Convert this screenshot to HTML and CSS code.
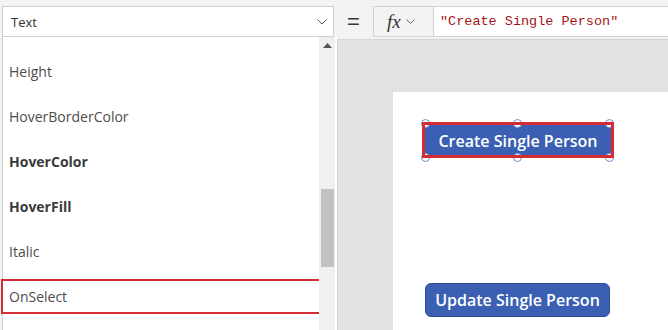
FILE: index.html
```html
<!DOCTYPE html>
<html>
<head>
<meta charset="utf-8">
<link rel="stylesheet" href="styles.css">
</head>
<body>
<div class="app">
  <div class="topbar">
    <div class="prop-select">
      <span class="prop-name">Text</span>
      <svg class="chev" width="10" height="6" viewBox="0 0 10 6"><path d="M0.5 0.5 L5 5 L9.5 0.5" fill="none" stroke="#555" stroke-width="1"/></svg>
    </div>
    <div class="equals">=</div>
    <div class="fx-box">
      <span class="fx">fx</span>
      <svg class="fx-chev" width="9" height="5" viewBox="0 0 9 5"><path d="M0.5 0.5 L4.5 4.5 L8.5 0.5" fill="none" stroke="#666" stroke-width="1"/></svg>
    </div>
    <div class="formula">"Create Single Person"</div>
  </div>
  <div class="main">
    <div class="list-panel">
      <div class="list">
        <div class="row">Height</div>
        <div class="row">HoverBorderColor</div>
        <div class="row bold">HoverColor</div>
        <div class="row bold">HoverFill</div>
        <div class="row">Italic</div>
        <div class="row selected">OnSelect</div>
      </div>
      <div class="scrollbar">
        <svg class="up" width="9" height="5" viewBox="0 0 9 5"><path d="M0 5 L4.5 0 L9 5 Z" fill="#555"/></svg>
        <div class="thumb"></div>
      </div>
    </div>
    <div class="stage">
      <div class="canvas">
        <div class="btn create">Create Single Person</div>
        <span class="handle h-l h-t"></span>
        <span class="handle h-m h-t"></span>
        <span class="handle h-r h-t"></span>
        <span class="handle h-l h-b"></span>
        <span class="handle h-m h-b"></span>
        <span class="handle h-r h-b"></span>
        <div class="sel-box"></div>
        <div class="btn update">Update Single Person</div>
      </div>
    </div>
  </div>
</div>
</body>
</html>
```

FILE: styles.css
```css
* { box-sizing: border-box; }
html, body { margin: 0; padding: 0; }
body {
  width: 668px;
  height: 330px;
  overflow: hidden;
  font-family: "Open Sans", "Noto Sans", sans-serif;
  background: #f3f3f3;
}
.app {
  width: 668px;
  height: 330px;
  display: flex;
  flex-direction: column;
}
.topbar {
  height: 37px;
  padding-top: 6px;
  display: flex;
  align-items: flex-start;
  background: #f3f3f3;
}
.prop-select {
  margin-left: 2px;
  width: 332px;
  height: 31px;
  background: #fff;
  border: 1px solid #cfcfcf;
  display: flex;
  align-items: center;
  justify-content: space-between;
  padding: 0 6px 0 8px;
}
.prop-name {
  font-size: 13px;
  color: #333;
  font-family: "Open Sans", sans-serif;
}
.equals {
  width: 39px;
  height: 31px;
  display: flex;
  align-items: center;
  justify-content: center;
  font-size: 22px;
  color: #333;
  font-family: "Liberation Sans", sans-serif;
}
.fx-box {
  width: 60px;
  height: 31px;
  border: 1px solid #d2d2d2;
  border-right: none;
  background: #f3f3f3;
  display: flex;
  align-items: center;
  padding-left: 13px;
  gap: 5px;
}
.fx {
  font-family: "Liberation Serif", serif;
  font-style: italic;
  font-size: 19px;
  color: #333;
}
.formula {
  flex: 1;
  height: 31px;
  background: #fff;
  border: 1px solid #d2d2d2;
  border-right: none;
  display: flex;
  align-items: center;
  padding-left: 6px;
  font-family: "Liberation Mono", monospace;
  font-size: 13.5px;
  color: #a31515;
}
.main {
  flex: 1;
  display: flex;
}
.list-panel {
  width: 335px;
  margin-left: 2px;
  display: flex;
  background: #fff;
  border-left: 1px solid #cfcfcf;
}
.list {
  width: 316px;
  padding-top: 17px;
  display: flex;
  flex-direction: column;
  gap: 10px;
}
.row {
  height: 35px;
  display: flex;
  align-items: center;
  padding-left: 6px;
  font-size: 14px;
  color: #4d4d4d;
}
.row.bold {
  font-weight: 700;
  color: #3a3a3a;
}
.row.selected {
  margin-left: -2px;
  padding-left: 6px;
  width: 321px;
  border: 2px solid #d52b35;
}
.scrollbar {
  width: 16px;
  background: #f0f0f0;
  display: flex;
  flex-direction: column;
  align-items: center;
}
.up {
  margin-top: 6px;
}
.thumb {
  margin-top: 141px;
  width: 13px;
  height: 78px;
  background: #c2c2c2;
}
.stage {
  flex: 1;
  margin-top: 2px;
  background: #e2e2e2;
  border-top: 1px solid #d6d6d6;
  border-left: 1px solid #d6d6d6;
  padding: 52px 0 0 55px;
}
.canvas {
  width: 100%;
  height: 100%;
  background: #fff;
  position: relative;
}
.btn {
  position: absolute;
  display: flex;
  align-items: center;
  justify-content: center;
  color: #fff;
  font-weight: 600;
  font-size: 16px;
  background: #3a5fb3;
}
.create {
  left: 32px;
  top: 33px;
  width: 186px;
  height: 31px;
}
.sel-box {
  position: absolute;
  left: 29px;
  top: 30px;
  width: 192px;
  height: 36px;
  border: 3px solid #d52b35;
}
.handle {
  position: absolute;
  width: 9px;
  height: 9px;
  margin: -4.5px 0 0 -4.5px;
  border-radius: 50%;
  background: #fff;
  border: 1px solid #6b93c9;
}
.h-l { left: 32px; }
.h-m { left: 124px; }
.h-r { left: 216px; }
.h-t { top: 31px; }
.h-b { top: 65px; }
.update {
  left: 32px;
  top: 191px;
  width: 185px;
  height: 34px;
  border-radius: 6px;
  border: 1px solid #2f4e98;
}
```
